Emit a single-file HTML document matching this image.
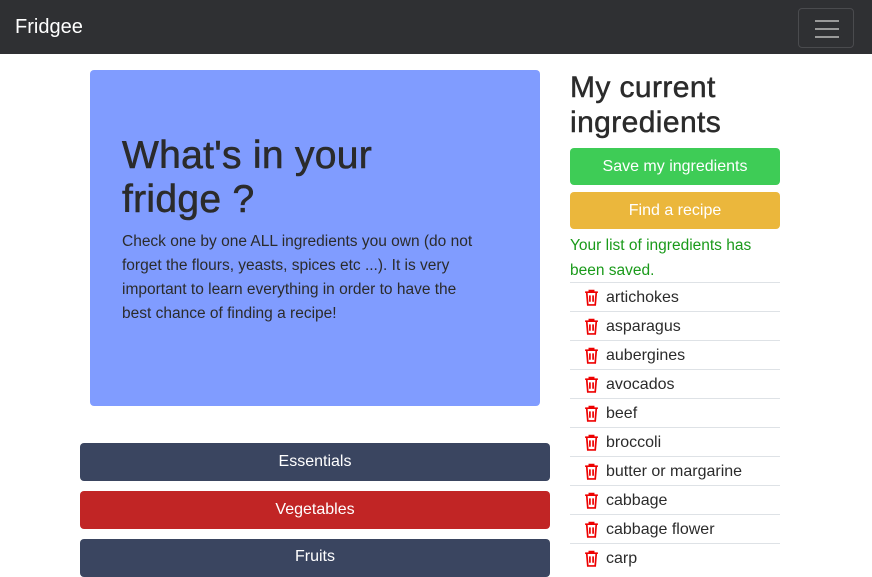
<!DOCTYPE html>
<html><head><style>
*{box-sizing:border-box;margin:0;padding:0}
body{width:872px;height:564px;overflow:hidden;background:#fff;font-family:"Liberation Sans",sans-serif;color:#2b2b2b;position:relative}
.nav{position:absolute;left:0;top:0;width:872px;height:54px;background:#2f3033}
.brand{position:absolute;left:15px;top:16px;color:#fff;font-size:20px}
.tog{position:absolute;left:798px;top:8px;width:56px;height:40px;border:1px solid #4a4b4e;border-radius:4px}
.tog i{position:absolute;left:16px;width:24px;height:2px;background:#9a9a9a}
.jumbo{position:absolute;left:90px;top:70px;width:450px;height:336px;background:#809cff;border-radius:4px}
h1{position:absolute;left:122px;top:134px;font-size:39px;font-weight:500;line-height:44px;color:#2b2b2b;letter-spacing:0.3px;-webkit-text-stroke:0.6px #2b2b2b}
.p{position:absolute;left:122px;top:230px;width:365px;font-size:15.5px;line-height:24px;color:#2b2b2b}
.btn{position:absolute;color:#fff;text-align:center;font-size:16px;border-radius:4px}
h2{position:absolute;left:570px;top:70px;font-size:30px;line-height:35px;font-weight:500;letter-spacing:0.4px;-webkit-text-stroke:0.5px #2b2b2b}
.ok{position:absolute;left:570px;top:233px;width:215px;color:#1a9a1a;font-size:15.5px;line-height:25px}
ul{position:absolute;left:570px;top:282px;width:210px;list-style:none}
li{height:29px;border-top:1px solid #dee2e6;font-size:16px;line-height:29px;padding-left:36px;position:relative}
li svg{position:absolute;left:14px;top:6px}
</style></head><body>
<div class="nav"><div class="brand">Fridgee</div><div class="tog"><i style="top:11px"></i><i style="top:19px"></i><i style="top:27px"></i></div></div>
<div class="jumbo"></div>
<h1>What's in your<br>fridge ?</h1>
<div class="p">Check one by one ALL ingredients you own (do not forget the flours, yeasts, spices etc ...). It is very important to learn everything in order to have the best chance of finding a recipe!</div>
<div class="btn" style="left:80px;top:443px;width:470px;height:38px;line-height:38px;background:#3a4560">Essentials</div>
<div class="btn" style="left:80px;top:491px;width:470px;height:38px;line-height:38px;background:#c12525">Vegetables</div>
<div class="btn" style="left:80px;top:539px;width:470px;height:38px;line-height:36px;background:#3a4560">Fruits</div>
<h2>My current<br>ingredients</h2>
<div class="btn" style="left:570px;top:148px;width:210px;height:37px;line-height:37px;background:#3ecc56">Save my ingredients</div>
<div class="btn" style="left:570px;top:192px;width:210px;height:37px;line-height:37px;background:#ebb73c">Find a recipe</div>
<div class="ok">Your list of ingredients has been saved.</div>
<ul>
<li><svg width="15" height="17" viewBox="0 0 14 16"><path d="M1 3h12M5 3V1.5h4V3M2.5 3l1 12h7l1-12M5.5 6v6M8.5 6v6" fill="none" stroke="#e00" stroke-width="1.6"/></svg>artichokes</li>
<li><svg width="15" height="17" viewBox="0 0 14 16"><path d="M1 3h12M5 3V1.5h4V3M2.5 3l1 12h7l1-12M5.5 6v6M8.5 6v6" fill="none" stroke="#e00" stroke-width="1.6"/></svg>asparagus</li>
<li><svg width="15" height="17" viewBox="0 0 14 16"><path d="M1 3h12M5 3V1.5h4V3M2.5 3l1 12h7l1-12M5.5 6v6M8.5 6v6" fill="none" stroke="#e00" stroke-width="1.6"/></svg>aubergines</li>
<li><svg width="15" height="17" viewBox="0 0 14 16"><path d="M1 3h12M5 3V1.5h4V3M2.5 3l1 12h7l1-12M5.5 6v6M8.5 6v6" fill="none" stroke="#e00" stroke-width="1.6"/></svg>avocados</li>
<li><svg width="15" height="17" viewBox="0 0 14 16"><path d="M1 3h12M5 3V1.5h4V3M2.5 3l1 12h7l1-12M5.5 6v6M8.5 6v6" fill="none" stroke="#e00" stroke-width="1.6"/></svg>beef</li>
<li><svg width="15" height="17" viewBox="0 0 14 16"><path d="M1 3h12M5 3V1.5h4V3M2.5 3l1 12h7l1-12M5.5 6v6M8.5 6v6" fill="none" stroke="#e00" stroke-width="1.6"/></svg>broccoli</li>
<li><svg width="15" height="17" viewBox="0 0 14 16"><path d="M1 3h12M5 3V1.5h4V3M2.5 3l1 12h7l1-12M5.5 6v6M8.5 6v6" fill="none" stroke="#e00" stroke-width="1.6"/></svg>butter or margarine</li>
<li><svg width="15" height="17" viewBox="0 0 14 16"><path d="M1 3h12M5 3V1.5h4V3M2.5 3l1 12h7l1-12M5.5 6v6M8.5 6v6" fill="none" stroke="#e00" stroke-width="1.6"/></svg>cabbage</li>
<li><svg width="15" height="17" viewBox="0 0 14 16"><path d="M1 3h12M5 3V1.5h4V3M2.5 3l1 12h7l1-12M5.5 6v6M8.5 6v6" fill="none" stroke="#e00" stroke-width="1.6"/></svg>cabbage flower</li>
<li><svg width="15" height="17" viewBox="0 0 14 16"><path d="M1 3h12M5 3V1.5h4V3M2.5 3l1 12h7l1-12M5.5 6v6M8.5 6v6" fill="none" stroke="#e00" stroke-width="1.6"/></svg>carp</li>
</ul>
</body></html>
